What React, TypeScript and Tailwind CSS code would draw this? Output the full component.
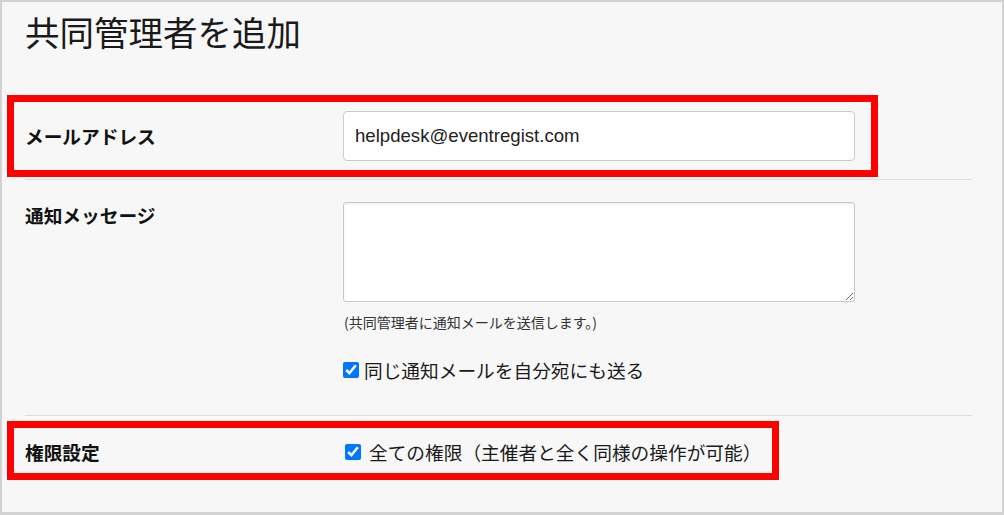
import React from "react";

const jp = { fontFamily: '"Noto Sans CJK JP", "Liberation Sans", sans-serif' };

export default function App() {
  return (
    <div
      className="w-[1004px] h-[515px] overflow-hidden border-l-2 border-t-2 border-r-2 border-b-[3px] border-[#d2d2d2] bg-[#f7f7f7] text-[#1a1a1a]"
      style={jp}
    >
      <div className="pl-[23px] pt-[9px]">
        <h1 className="text-[34.5px] leading-[40px] font-normal text-[#1a1a1a]">共同管理者を追加</h1>
      </div>

      <div className="ml-[23px] w-[947px] mt-[44px]">
        {/* Row 1 */}
        <div className="relative flex items-center pt-[16px] pb-[18px] border-b border-[#dddddd]">
          <div className="w-[318px] text-[18.7px] leading-[26px] font-bold text-[#111]">メールアドレス</div>
          <div className="w-[512px] h-[50px] rounded-[4px] border border-[#cccccc] bg-white flex items-center pl-[11px]">
            <span className="text-[18.6px] text-[#222]" style={{ fontFamily: '"Liberation Sans", Arial, sans-serif' }}>
              helpdesk@eventregist.com
            </span>
          </div>
          <div className="absolute left-[-18px] top-0 w-[871px] h-[82px] border-[7px] border-[#ff0000] pointer-events-none" />
        </div>

        {/* Row 2 */}
        <div className="flex items-start pt-[22px] pb-[32px] border-b border-[#dddddd]">
          <div className="w-[318px] text-[18.7px] leading-[26px] font-bold text-[#111]">通知メッセージ</div>
          <div className="flex flex-col">
            <textarea
              className="block w-[512px] h-[100px] rounded-[3px] border border-[#c8c8c8] bg-white shadow-[inset_0_1px_2px_rgba(0,0,0,0.08)] outline-none"
              defaultValue=""
            />
            <div className="mt-[10px] ml-[1px] text-[14px] leading-[20px] text-[#333]">(共同管理者に通知メールを送信します。)</div>
            <label className="mt-[24px] flex items-center gap-[5px] text-[18.7px] leading-[27px] text-[#1a1a1a]">
              <input type="checkbox" defaultChecked className="w-[16px] h-[16px] m-0 accent-[#0075ff]" />
              <span>同じ通知メールを自分宛にも送る</span>
            </label>
          </div>
        </div>

        {/* Row 3 */}
        <div className="relative flex items-center pt-[22px] pb-[20px]">
          <div className="w-[318px] text-[18.7px] leading-[26px] font-bold text-[#111]">権限設定</div>
          <label className="ml-[2px] flex items-center gap-[8px] text-[18.7px] leading-[27px] text-[#1a1a1a]">
            <input type="checkbox" defaultChecked className="w-[16px] h-[16px] m-0 accent-[#0075ff]" />
            <span>全ての権限（主催者と全く同様の操作が可能）</span>
          </label>
          <div className="absolute left-[-18px] top-[5px] w-[772px] h-[59px] border-[7px] border-[#ff0000] pointer-events-none" />
        </div>
      </div>
    </div>
  );
}
